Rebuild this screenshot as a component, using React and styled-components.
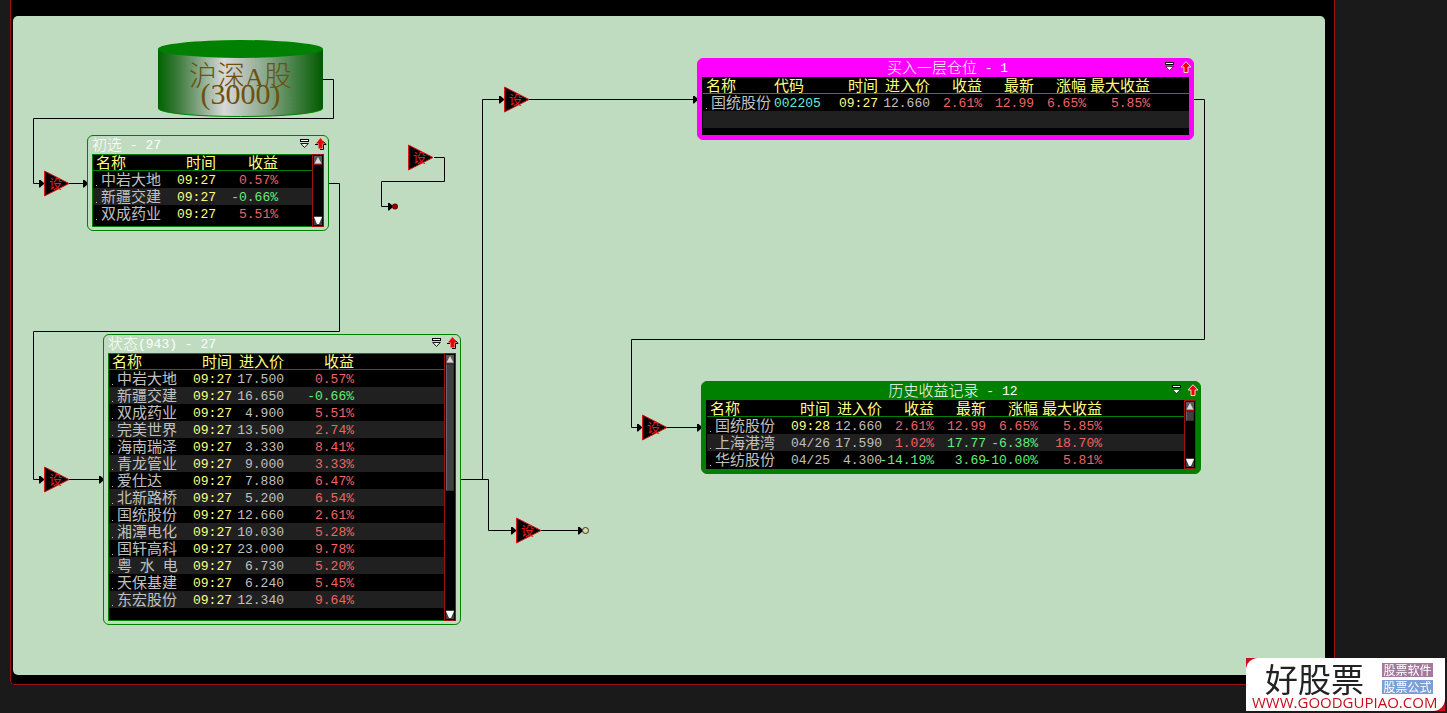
import React from 'react'
import styled, { createGlobalStyle } from 'styled-components'

const GlobalStyle = createGlobalStyle`
* { box-sizing: border-box; }
body {
  margin: 0;
  background: #1a1a1a;
  font-family: "Noto Sans CJK SC", sans-serif;
}
button {
  border: 0;
  padding: 0;
  background: none;
  cursor: pointer;
}
svg { display: block; }
`

const Page = styled.div`
  display: flex;
  min-height: 100vh;
  padding: 0 112px 28px 10px;
`
const Frame = styled.main`
  flex: 1;
  display: flex;
  padding: 16px 9px 9px 2px;
  background: #000;
  border: 1px solid #a01010;
  border-top: 0;
  border-radius: 0 0 5px 5px;
`
const Canvas = styled.div`
  position: relative;
  flex: 1;
  min-height: 620px;
  background: #bfdcc0;
  border-radius: 5px;
  overflow: hidden;
`
const Wires = styled.svg`
  position: absolute;
  inset: 0;
  width: 100%;
  height: 100%;
`
const Placed = styled.div`
  position: absolute;
  left: ${(p) => p.$x}px;
  top: ${(p) => p.$y}px;
`

const Latin = styled.span`
  font-family: "Liberation Mono", monospace;
  font-size: 13px;
  line-height: 19px;
  white-space: pre;
`

const Window = styled.section`
  display: flex;
  flex-direction: column;
  width: ${(p) => p.$w}px;
  height: ${(p) => p.$h}px;
  padding: 0 4px ${(p) => (p.$solid ? 4 : 3)}px;
  background: ${(p) => p.$fill};
  border: 1px solid ${(p) => p.$edge};
  border-radius: 6px;
`
const TitleBar = styled.header`
  display: grid;
  height: 18px;
  margin-right: -4px;
`
const Title = styled.h2`
  grid-area: 1 / 1;
  display: flex;
  align-items: flex-start;
  justify-content: ${(p) => (p.$center ? 'center' : 'flex-start')};
  margin: 0;
  font-size: 15px;
  font-weight: 300;
  line-height: 16px;
  color: #fff;
  white-space: nowrap;
`
const Tools = styled.div`
  grid-area: 1 / 1;
  justify-self: end;
  display: flex;
  gap: 5px;
  padding: 2px 1px 0 0;
`
const ToolButton = styled.button`
  display: block;
  height: 12px;
`
const Body = styled.div`
  flex: 1;
  display: flex;
  min-height: 0;
  background: #000;
`
const Sheet = styled.div`
  flex: 1;
  min-width: 0;
  border: 1px solid ${(p) => p.$edge};
  border-right: 0;
`
const Table = styled.table`
  width: 100%;
  table-layout: fixed;
  border-spacing: 0;
  font-size: 15px;
  th, td {
    padding: 0;
    font-weight: 400;
  }
  th {
    border-bottom: 1px solid ${(p) => p.$line};
    color: #ffff80;
  }
  tbody tr:nth-child(even) { background: #202020; }
`
const Col = styled.col`
  width: ${(p) => (p.$w ? p.$w + 'px' : 'auto')};
`
const Cell = styled.div`
  display: flex;
  align-items: flex-start;
  justify-content: ${(p) => (p.$left ? 'flex-start' : 'flex-end')};
  height: ${(p) => (p.$head ? 15 : 17)}px;
  line-height: ${(p) => (p.$head ? 13 : 15)}px;
  padding-left: ${(p) => (p.$indent || 0)}px;
  white-space: nowrap;
  color: ${(p) => p.$color || 'inherit'};
`
const Dot = styled.i`
  flex: none;
  align-self: flex-end;
  width: 1px;
  height: 1px;
  margin: 0 4px 2px 3px;
  background: #c0c0c0;
`
const ScrollBar = styled.div`
  display: flex;
  flex-direction: column;
  width: 12px;
  padding: 1px;
  border: 1px solid #a01010;
  background: #000;
`
const ScrollButton = styled.button`
  display: block;
  width: 8px;
  height: 9px;
  background: ${(p) => (p.$down ? '#404040' : '#585858')};
`
const Track = styled.div`
  flex: 1;
`
const Thumb = styled.div`
  height: ${(p) => p.$h}px;
  background: #404040;
  border: 1px solid #303030;
  border-left-color: #666;
`

const Cylinder = styled.div`
  display: grid;
  width: 165px;
  height: 77px;
  color: #6b5210;
  > * { grid-area: 1 / 1; }
`
const CylinderText = styled.div`
  display: flex;
  flex-direction: column;
  align-items: center;
  padding-top: 20px;
  font-size: 28px;
  font-weight: 300;
  line-height: 28px;
  white-space: nowrap;
`
const Serif = styled.span`
  font-family: "Liberation Serif", serif;
  font-size: 26px;
  font-weight: 400;
`
const Count = styled(Serif)`
  font-size: 30px;
  line-height: 28px;
  margin-top: -12px;
`

const Logo = styled.a`
  position: fixed;
  right: 2px;
  bottom: 2px;
  width: 199px;
  background: #c8101c;
  text-decoration: none;
`
const LogoCard = styled.div`
  height: 53px;
  padding: 4px 5px 0 6px;
  background: #fff;
  border-radius: 12px 0 12px 0;
`
const LogoTop = styled.div`
  display: flex;
  justify-content: space-between;
  padding: 0 7px 0 13px;
`
const LogoName = styled.strong`
  font-size: 33px;
  font-weight: 400;
  line-height: 32px;
  color: #222;
`
const Tags = styled.div`
  display: flex;
  flex-direction: column;
  gap: 3px;
  padding-top: 1px;
`
const Tag = styled.span`
  width: 51px;
  height: 14px;
  background: ${(p) => p.$bg};
  color: #fff;
  font-size: 12px;
  line-height: 14px;
  text-align: center;
`
const LogoUrl = styled.div`
  font-family: "Open Sans", sans-serif;
  font-size: 15px;
  line-height: 16px;
  color: #c8101c;
`

// Chinese at 15px, everything else in the half-width face
const Mixed = ({ children }) =>
  children
    .split(/([\x20-\x7e]+)/)
    .filter(Boolean)
    .map((s, i) => (/^[\x20-\x7e]/.test(s) ? <Latin key={i}>{s}</Latin> : <span key={i}>{s}</span>))

const GRAY = '#c0c0c0'
const YELLOW = '#ffff80'
const RED = '#f06464'
const GREEN = '#64f078'
const CYAN = '#70e8d8'

const signColor = (v) => (v.startsWith('-') ? GREEN : RED)

// the latest price takes the colour of the change beside it
const colorOf = (cols, row, i) => {
  const head = cols[i][0]
  if (!row[i]) return undefined
  if (head === '时间') return row[i].includes(':') ? YELLOW : GRAY
  if (head === '代码') return CYAN
  if (head === '名称' || head === '进入价') return GRAY
  if (head === '最新') return signColor(row[i + 1])
  return signColor(row[i])
}

const MenuIcon = ({ solid }) => (
  <svg width="10" height="12" viewBox="0 0 10 12">
    <rect x=".5" y="1.5" width="8" height="2" fill="#fff" stroke="#000" />
    <path d="M.7 5.500H8.300L4.500 9.500Z" fill={solid ? '#fff' : '#e8f4e8'} stroke="#000" strokeWidth={solid ? 0.6 : 0.9} />
  </svg>
)

const UpIcon = ({ solid }) =>
  solid ? (
    <svg width="12" height="12" viewBox="0 0 12 12">
      <path d="M6 .7L11 6H8V11.500H4V6H1Z" fill="#f00000" stroke="#ffd0d0" />
    </svg>
  ) : (
    <svg width="12" height="12" viewBox="0 0 12 12">
      <path d="M8.500 3.500L11 6.500H8.500V11.500H5M0 6.500H3" fill="none" stroke="#000" />
      <path d="M5.500 0L10 5.500H7.500V10.500H3.500V5.500H1Z" fill="#f00000" />
    </svg>
  )

const Scroller = ({ thumb }) => (
  <ScrollBar>
    <ScrollButton aria-label="上">
      <svg width="8" height="9">
        <path d="M4 1L7.5 7.5H.5Z" fill="#d8d8d8" />
        <path d="M0 8.5H8" stroke="#a01010" />
      </svg>
    </ScrollButton>
    <Track>{thumb && <Thumb $h={thumb} />}</Track>
    <ScrollButton $down aria-label="下">
      <svg width="8" height="9"><path d="M0 1H8L5 8H3Z" fill="#fff" /></svg>
    </ScrollButton>
  </ScrollBar>
)

const Pool = ({ x, y, w, h, title, fill, edge, inner, line, cols, rows, scroll, thumb, solid }) => (
  <Placed $x={x} $y={y}>
    <Window $w={w} $h={h} $fill={fill} $edge={edge} $solid={solid}>
      <TitleBar>
        <Title $center={solid}><Mixed>{title}</Mixed></Title>
        <Tools>
          <ToolButton aria-label="菜单"><MenuIcon solid={solid} /></ToolButton>
          <ToolButton aria-label="置顶"><UpIcon solid={solid} /></ToolButton>
        </Tools>
      </TitleBar>
      <Body>
        <Sheet $edge={inner}>
          <Table $line={line}>
            <colgroup>
              {cols.map(([head, width]) => <Col key={head} $w={width} />)}
              <Col />
            </colgroup>
            <thead>
              <tr>
                {cols.map(([head], i) => (
                  <th key={head} scope="col">
                    <Cell $head $left={i === 0 || head === '代码'} $indent={i === 0 ? 3 : 0}>{head}</Cell>
                  </th>
                ))}
                <th />
              </tr>
            </thead>
            <tbody>
              {rows.map((row, r) => (
                <tr key={r}>
                  {cols.map(([head], i) => (
                    <td key={head}>
                      <Cell $left={i === 0 || head === '代码'} $color={colorOf(cols, row, i)}>
                        {i === 0 && row[0] && <Dot />}
                        {row[i] && <Mixed>{row[i]}</Mixed>}
                      </Cell>
                    </td>
                  ))}
                  <td />
                </tr>
              ))}
            </tbody>
          </Table>
        </Sheet>
        {scroll && <Scroller thumb={thumb} />}
      </Body>
    </Window>
  </Placed>
)

const Gate = ({ x, y }) => (
  <Placed $x={x} $y={y - 13}>
    <svg width="27" height="27" viewBox="0 0 27 27">
      <path d="M.5 1L25 13.5L.5 26Z" fill="#000" stroke="#e01414" />
      <text x="5" y="18" fontSize="13" fill="#e81c1c">设</text>
    </svg>
  </Placed>
)

const wires = [
  'M310 63.5H320.5V102.5H20.5V167.5H26',
  'M56 167.5H70',
  'M316 167.5H326.5V315.5H20.5V463.5H26',
  'M56 463.5H86',
  'M448 463.5H469.5V83.5H486',
  'M516 83.5H680',
  'M469 463.5H475.5V514.5H498',
  'M528 514.5H565',
  'M421 141.5H431.5V165.5H368.5V190.5H375',
  'M1181 83.5H1191.5V323.5H618.5V411.5H624',
  'M654 411.5H684',
]

const gates = [[31, 167], [31, 463], [491, 83], [395, 141], [503, 514], [629, 411]]

const timeCols = [['名称', 67], ['时间', 56]]

const firstRows = [
  ['中岩大地', '09:27', '0.57%'],
  ['新疆交建', '09:27', '-0.66%'],
  ['双成药业', '09:27', '5.51%'],
]

const stateRows = [
  ['中岩大地', '09:27', '17.500', '0.57%'],
  ['新疆交建', '09:27', '16.650', '-0.66%'],
  ['双成药业', '09:27', '4.900', '5.51%'],
  ['完美世界', '09:27', '13.500', '2.74%'],
  ['海南瑞泽', '09:27', '3.330', '8.41%'],
  ['青龙管业', '09:27', '9.000', '3.33%'],
  ['爱仕达', '09:27', '7.880', '6.47%'],
  ['北新路桥', '09:27', '5.200', '6.54%'],
  ['国统股份', '09:27', '12.660', '2.61%'],
  ['湘潭电化', '09:27', '10.030', '5.28%'],
  ['国轩高科', '09:27', '23.000', '9.78%'],
  ['粤 水 电', '09:27', '6.730', '5.20%'],
  ['天保基建', '09:27', '6.240', '5.45%'],
  ['东宏股份', '09:27', '12.340', '9.64%'],
]

const profitCols = [['进入价', 52], ['收益', 52], ['最新', 52], ['涨幅', 52], ['最大收益', 64]]

const buyRows = [
  ['国统股份', '002205', '09:27', '12.660', '2.61%', '12.99', '6.65%', '5.85%'],
  [],
]

const historyRows = [
  ['国统股份', '09:28', '12.660', '2.61%', '12.99', '6.65%', '5.85%'],
  ['上海港湾', '04/26', '17.590', '1.02%', '17.77', '-6.38%', '18.70%'],
  ['华纺股份', '04/25', '4.300', '-14.19%', '3.69', '-10.00%', '5.81%'],
]

const Source = () => (
  <Placed $x={145} $y={24}>
    <Cylinder>
      <svg width="165" height="77" viewBox="0 0 165 77">
        <defs>
          <linearGradient id="metal">
            <stop offset="0" stopColor="#006400" />
            <stop offset=".12" stopColor="#3c7a3c" />
            <stop offset=".4" stopColor="#d8d8d8" />
            <stop offset=".65" stopColor="#8ca88c" />
            <stop offset="1" stopColor="#005a00" />
          </linearGradient>
        </defs>
        <path d="M0 9V68C0 73 37 76.5 82.5 76.5S165 73 165 68V9Z" fill="url(#metal)" />
        <path d="M0 68C0 73 37 76.5 82.5 76.5S165 73 165 68" fill="none" stroke="#008000" />
        <ellipse cx="82.5" cy="9" rx="82.5" ry="9" fill="#008000" />
      </svg>
      <CylinderText>
        <span>沪深<Serif>A</Serif>股</span>
        <Count>(3000)</Count>
      </CylinderText>
    </Cylinder>
  </Placed>
)

const App = () => {
  return (
    <Page>
      <GlobalStyle />
      <Frame>
        <Canvas>
          <Wires>
            <defs>
              <marker id="tip" markerUnits="userSpaceOnUse" markerWidth="6" markerHeight="8" refX="0" refY="4" orient="auto">
                <path d="M0 0H1L5 3.5V4.5L1 8H0Z" fill="#000" />
              </marker>
            </defs>
            {wires.map((d) => (
              <path key={d} d={d} fill="none" stroke="#000" markerEnd="url(#tip)" />
            ))}
            <circle cx="382" cy="190.5" r="3" fill="#800000" />
            <circle cx="572.5" cy="514.5" r="3" fill="#d8d8b0" stroke="#40301c" />
          </Wires>
          <Source />
          {gates.map(([x, y]) => <Gate key={x + '-' + y} x={x} y={y} />)}
          <Pool
            x={74} y={119} w={242} h={96}
            title="初选 - 27"
            fill="#bfdcc0" edge="#008000" inner="#008000" line="#008000"
            cols={[...timeCols, ['收益', 62]]}
            rows={firstRows}
            scroll
          />
          <Pool
            x={90} y={318} w={358} h={291}
            title="状态(943) - 27"
            fill="#bfdcc0" edge="#008000" inner="#008000" line="#008000"
            cols={[...timeCols, ['进入价', 52], ['收益', 70]]}
            rows={stateRows}
            scroll thumb={127}
          />
          <Pool
            x={684} y={42} w={497} h={82}
            title="买入一层仓位 - 1"
            fill="#ff00ff" edge="#ff00ff" inner="#000" line="#c020c0"
            cols={[['名称', 71], ['代码', 52], ['时间', 52], ...profitCols]}
            rows={buyRows}
            solid
          />
          <Pool
            x={688} y={365} w={500} h={93}
            title="历史收益记录 - 12"
            fill="#008000" edge="#008000" inner="#000" line="#008000"
            cols={[['名称', 71], ['时间', 52], ...profitCols]}
            rows={historyRows}
            scroll thumb={10} solid
          />
        </Canvas>
      </Frame>
      <Logo href="#">
        <LogoCard>
          <LogoTop>
            <LogoName>好股票</LogoName>
            <Tags>
              <Tag $bg="#a5789e">股票软件</Tag>
              <Tag $bg="#7b9fd6">股票公式</Tag>
            </Tags>
          </LogoTop>
          <LogoUrl>WWW.GOODGUPIAO.COM</LogoUrl>
        </LogoCard>
      </Logo>
    </Page>
  )
}

export default App
